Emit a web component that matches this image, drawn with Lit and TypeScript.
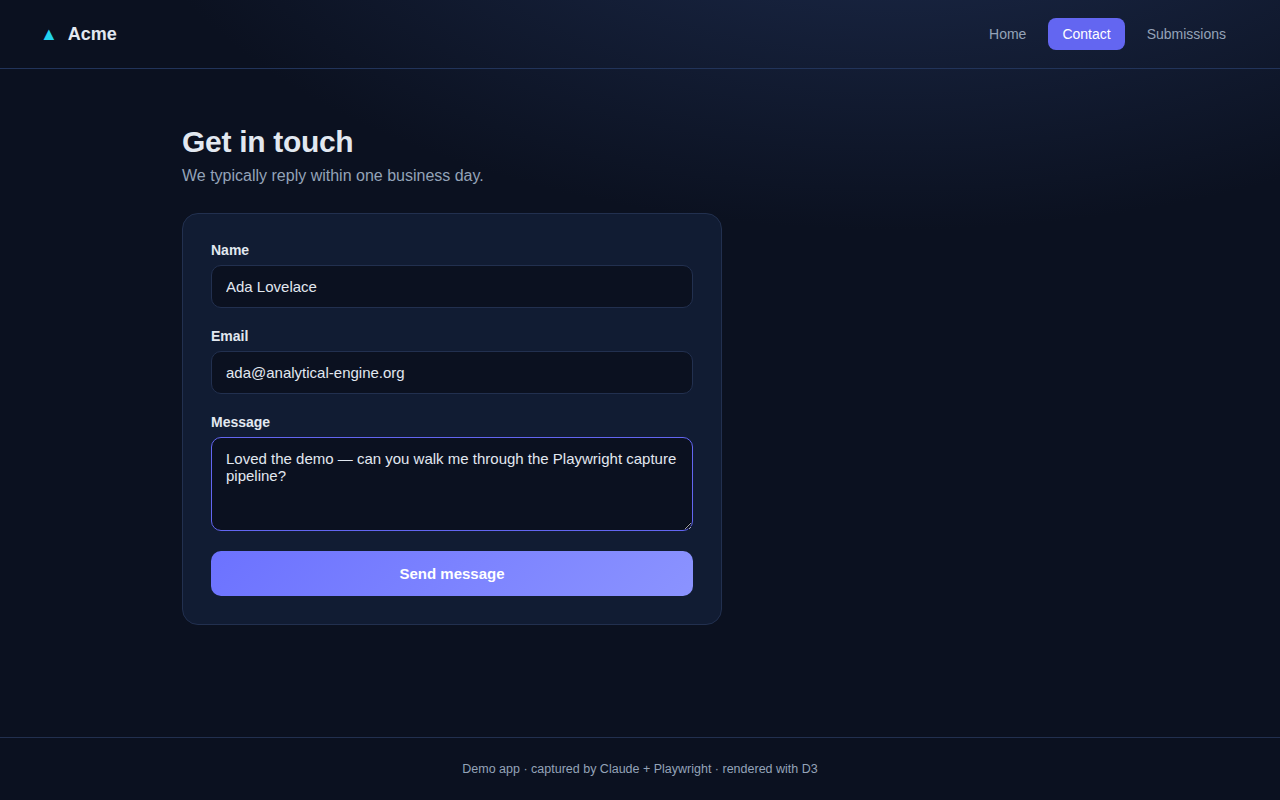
import { LitElement, html, css } from "lit";
import { customElement } from "lit/decorators.js";

@customElement("app-root")
export class AppRoot extends LitElement {
  static styles = css`
    :host {
      display: flex;
      flex-direction: column;
      min-height: 800px;
      box-sizing: border-box;
      font-family: "Liberation Sans", Arial, sans-serif;
      color: #e2e8f0;
      background:
        radial-gradient(1200px 600px at 70% -20%, #1e2d50 0%, #0b1120 65%) no-repeat,
        #0b1120;
    }
    * { box-sizing: border-box; }
    .top {
      height: 69px;
      flex: none;
      display: flex;
      align-items: center;
      justify-content: space-between;
      padding: 0 40px;
      border-bottom: 1px solid #22345a;
    }
    .brand {
      display: flex;
      align-items: center;
      gap: 10px;
      font-size: 18px;
      font-weight: 700;
    }
    .mark { color: #22d3ee; font-size: 18px; line-height: 1; }
    nav { display: flex; gap: 8px; }
    nav a {
      padding: 0 14px;
      height: 32px;
      display: flex;
      align-items: center;
      border-radius: 8px;
      font-size: 14px;
      color: #94a3b8;
    }
    nav a.on { background: #6366f1; color: #fff; }
    main {
      flex: 1;
      width: 916px;
      margin: 0 auto;
      padding-top: 56px;
    }
    h1 {
      margin: 0;
      font-size: 30px;
      line-height: 34px;
      font-weight: 700;
      letter-spacing: -0.3px;
    }
    .sub {
      margin: 8px 0 0;
      font-size: 16px;
      line-height: 18px;
      color: #94a3b8;
    }
    form {
      margin-top: 28px;
      width: 540px;
      padding: 28px;
      display: flex;
      flex-direction: column;
      gap: 20px;
      background: #111c33;
      border: 1px solid #22304f;
      border-radius: 16px;
    }
    .field { display: flex; flex-direction: column; gap: 7px; }
    label { font-size: 14px; line-height: 16px; font-weight: 700; }
    input, textarea {
      display: block;
      width: 100%;
      padding: 12px 14px;
      font: 15px "Liberation Sans", Arial, sans-serif;
      color: #e2e8f0;
      background: #0b1120;
      border: 1px solid #22304f;
      border-radius: 10px;
      outline: none;
    }
    textarea { height: 94px; border-color: #6366f1; resize: vertical; }
    button {
      height: 45px;
      border: 0;
      border-radius: 10px;
      font: 700 15px "Liberation Sans", Arial, sans-serif;
      color: #fff;
      background: linear-gradient(135deg, #6c72ff, #8b93ff);
    }
    footer {
      height: 63px;
      flex: none;
      display: flex;
      align-items: center;
      justify-content: center;
      border-top: 1px solid #22304f;
      font-size: 12.5px;
      color: #94a3b8;
    }
  `;

  render() {
    return html`
      <header class="top">
        <div class="brand"><span class="mark">▲</span><span>Acme</span></div>
        <nav>
          <a>Home</a>
          <a class="on">Contact</a>
          <a>Submissions</a>
        </nav>
      </header>
      <main>
        <h1>Get in touch</h1>
        <p class="sub">We typically reply within one business day.</p>
        <form @submit=${(e: Event) => e.preventDefault()}>
          <div class="field">
            <label for="n">Name</label>
            <input id="n" .value=${"Ada Lovelace"} />
          </div>
          <div class="field">
            <label for="e">Email</label>
            <input id="e" .value=${"ada@analytical-engine.org"} />
          </div>
          <div class="field">
            <label for="m">Message</label>
            <textarea id="m" .value=${"Loved the demo — can you walk me through the Playwright capture pipeline?"}></textarea>
          </div>
          <button type="submit">Send message</button>
        </form>
      </main>
      <footer>Demo app · captured by Claude + Playwright · rendered with D3</footer>
    `;
  }
}
